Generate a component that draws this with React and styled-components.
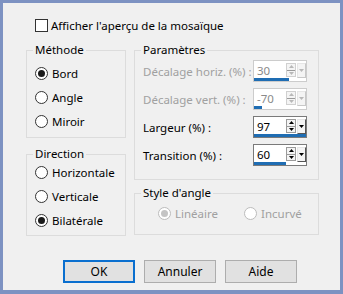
import React from "react";
import styled, { createGlobalStyle } from "styled-components";

const Global = createGlobalStyle`
  html, body { margin: 0; padding: 0; background: #f0f0f0; }
  * { box-sizing: border-box; }
`;

const Dialog = styled.div`
  width: 343px;
  height: 294px;
  border: 3px solid #7d92c2;
  border-bottom-width: 4px;
  background: #f0f0f0;
  font-family: "Noto Sans", "Open Sans", sans-serif;
  font-size: 11.5px;
  color: #000;
  padding: 15px 0 0 23px;
  display: flex;
  flex-direction: column;
`;

const CheckRow = styled.label`
  display: flex;
  align-items: center;
  gap: 3px;
  height: 14px;
  padding-left: 9px;
`;

const CheckBox = styled.span`
  width: 13px;
  height: 13px;
  border: 1px solid #333;
  background: #fff;
`;

const Columns = styled.div`
  display: flex;
  gap: 8px;
  margin-top: 10px;
`;

const Col = styled.div`
  display: flex;
  flex-direction: column;
  gap: ${(p) => p.$gap}px;
  width: ${(p) => p.$w}px;
`;

const Group = styled.fieldset`
  margin: 0;
  border: 1px solid #dcdcdc;
  padding: ${(p) => p.$pad};
  min-width: 0;
  display: flex;
  flex-direction: column;
`;

const Legend = styled.legend`
  padding: 0 2px;
  margin-left: -2px;
  line-height: 16px;
  height: 16px;
  color: #000;
`;

const RadioList = styled.div`
  display: flex;
  flex-direction: ${(p) => (p.$row ? "row" : "column")};
  gap: ${(p) => (p.$row ? "26px" : "0")};
  margin-top: ${(p) => p.$shift || 0}px;
  padding-left: ${(p) => p.$indent || 0}px;
`;

const RadioRow = styled.div`
  display: flex;
  align-items: center;
  gap: 4px;
  height: 24px;
  white-space: nowrap;
  color: ${(p) => (p.$disabled ? "#a0a0a0" : "#000")};
`;

const RadioCircle = styled.span`
  width: 13px;
  height: 13px;
  flex: none;
  border-radius: 50%;
  border: 1px solid ${(p) => (p.$disabled ? "#bcbcbc" : "#333")};
  background: #fff;
  display: flex;
  align-items: center;
  justify-content: center;
  &::after {
    content: "";
    width: 7px;
    height: 7px;
    border-radius: 50%;
    background: ${(p) => (p.$disabled ? "#c4c4c4" : "#1a1a1a")};
    display: ${(p) => (p.$checked ? "block" : "none")};
  }
`;

const ParamList = styled.div`
  display: flex;
  flex-direction: column;
  gap: 6px;
`;

const ParamRow = styled.div`
  display: flex;
  align-items: center;
  height: 22px;
  white-space: nowrap;
  color: ${(p) => (p.$disabled ? "#a0a0a0" : "#000")};
`;

const ParamLabel = styled.span`
  flex: 1;
`;

const Spin = styled.div`
  width: 54px;
  height: 22px;
  display: flex;
  position: relative;
  flex: none;
`;

const SpinField = styled.div`
  flex: 1;
  border: 1px solid ${(p) => (p.$disabled ? "#cccccc" : "#7a7a7a")};
  border-right: none;
  background: #fff;
  display: flex;
  align-items: center;
  padding-left: 3px;
  padding-bottom: 2px;
  color: ${(p) => (p.$disabled ? "#8a8a8a" : "#000")};
`;

const Bar = styled.span`
  position: absolute;
  left: 1px;
  bottom: 1px;
  height: 3px;
  background: #1f6db3;
`;

const Arrows = styled.div`
  width: 21px;
  border: 1px solid ${(p) => (p.$disabled ? "#cccccc" : "#7a7a7a")};
  border-left: none;
  background: #fff;
  display: flex;
  align-items: flex-start;
  padding-top: 2px;
  gap: 1px;
`;

const UpDown = styled.div`
  width: 10px;
  height: 14px;
  border: 1px solid ${(p) => (p.$disabled ? "#d0d0d0" : "#9a9a9a")};
  display: flex;
  flex-direction: column;
  background: #f4f4f4;
`;

const Half = styled.div`
  flex: 1;
  display: flex;
  align-items: center;
  justify-content: center;
  & + & { border-top: 1px solid ${(p) => (p.$disabled ? "#d0d0d0" : "#9a9a9a")}; }
`;

const Drop = styled.div`
  width: 9px;
  height: 15px;
  background: #f4f4f4;
  border-right: 1px solid ${(p) => (p.$disabled ? "#c8c8c8" : "#555")};
  border-bottom: 1px solid ${(p) => (p.$disabled ? "#c8c8c8" : "#555")};
  border-top: 1px solid #e6e6e6;
  border-left: 1px solid #e6e6e6;
  display: flex;
  align-items: center;
  justify-content: center;
`;

const Tri = ({ up, color }) => (
  <svg width="5" height="3" viewBox="0 0 5 3">
    <polygon points={up ? "2.5,0 5,3 0,3" : "0,0 5,0 2.5,3"} fill={color} />
  </svg>
);

const Buttons = styled.div`
  display: flex;
  gap: 9px;
  margin-top: 24px;
  padding-left: 37px;
`;

const Button = styled.button`
  width: 72px;
  height: 23px;
  font-family: inherit;
  font-size: 12px;
  color: #000;
  background: #e1e1e1;
  border: ${(p) => (p.$primary ? "2px solid #0a6fcf" : "1px solid #adadad")};
  padding: 0;
  margin: 0;
`;

const Radio = ({ label, checked, disabled }) => (
  <RadioRow $disabled={disabled}>
    <RadioCircle $checked={checked} $disabled={disabled} />
    <span>{label}</span>
  </RadioRow>
);

const params = [
  { label: "Décalage horiz. (%) :", value: "30", bar: 35, disabled: true },
  { label: "Décalage vert. (%) :", value: "-70", bar: 8, disabled: true },
  { label: "Largeur (%) :", value: "97", bar: 52, disabled: false },
  { label: "Transition (%) :", value: "60", bar: 32, disabled: false },
];

const SpinBox = ({ value, bar, disabled }) => {
  const ac = disabled ? "#b8b8b8" : "#000";
  return (
    <Spin>
      <SpinField $disabled={disabled}>{value}</SpinField>
      <Arrows $disabled={disabled}>
        <UpDown $disabled={disabled}>
          <Half $disabled={disabled}><Tri up color={ac} /></Half>
          <Half $disabled={disabled}><Tri color={ac} /></Half>
        </UpDown>
        <Drop $disabled={disabled}><Tri color={ac} /></Drop>
      </Arrows>
      <Bar style={{ width: bar + "px" }} />
    </Spin>
  );
};

export default function App() {
  return (
    <>
      <Global />
      <Dialog>
        <CheckRow>
          <CheckBox />
          <span>Afficher l'aperçu de la mosaïque</span>
        </CheckRow>
        <Columns>
          <Col $w={100} $gap={8}>
            <Group $pad="3px 6px 4px 8px">
              <Legend>Méthode</Legend>
              <RadioList>
                <Radio label="Bord" checked />
                <Radio label="Angle" />
                <Radio label="Miroir" />
              </RadioList>
            </Group>
            <Group $pad="0 6px 3px 8px">
              <Legend>Direction</Legend>
              <RadioList $shift={-2}>
                <Radio label="Horizontale" />
                <Radio label="Verticale" />
                <Radio label="Bilatérale" checked />
              </RadioList>
            </Group>
          </Col>
          <Col $w={185} $gap={5}>
            <Group $pad="2px 11px 13px 8px">
              <Legend>Paramètres</Legend>
              <ParamList>
                {params.map((p) => (
                  <ParamRow key={p.label} $disabled={p.disabled}>
                    <ParamLabel>{p.label}</ParamLabel>
                    <SpinBox value={p.value} bar={p.bar} disabled={p.disabled} />
                  </ParamRow>
                ))}
              </ParamList>
            </Group>
            <Group $pad="0 6px 9px 8px">
              <Legend>Style d'angle</Legend>
              <RadioList $row $indent={15}>
                <Radio label="Linéaire" checked disabled />
                <Radio label="Incurvé" disabled />
              </RadioList>
            </Group>
          </Col>
        </Columns>
        <Buttons>
          <Button $primary>OK</Button>
          <Button>Annuler</Button>
          <Button>Aide</Button>
        </Buttons>
      </Dialog>
    </>
  );
}
